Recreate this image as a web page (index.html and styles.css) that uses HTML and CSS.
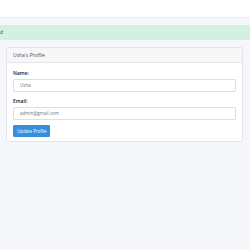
FILE: index.html
```html
<!DOCTYPE html>
<html>
<head>
<meta charset="utf-8">
<link rel="stylesheet" href="styles.css">
</head>
<body>
<nav class="navbar"></nav>
<div class="alert"><div class="alert-clip"><span class="alert-text">Profile updated</span></div></div>
<div class="card">
  <div class="card-header">Usha's Profile</div>
  <div class="card-body">
    <label class="label">Name:</label>
    <div class="input">Usha</div>
    <label class="label">Email:</label>
    <div class="input">admin@gmail.com</div>
    <button class="btn">Update Profile</button>
  </div>
</div>
</body>
</html>
```
FILE: styles.css
```css
html, body {
  margin: 0;
  padding: 0;
}
body {
  background: #f5f7fb;
  font-family: "Open Sans", "Noto Sans", sans-serif;
  font-size: 5px;
  color: #212529;
  width: 250px;
  height: 250px;
  overflow: hidden;
}
.navbar {
  height: 17px;
  background: #ffffff;
  border-bottom: 1px solid #e8eaef;
}
.alert {
  margin-top: 7px;
  height: 15px;
  background: #d4f0e1;
  display: flex;
  align-items: center;
  color: #155724;
}
.alert-clip {
  width: 3px;
  display: flex;
  justify-content: flex-end;
  overflow: hidden;
}
.alert-text {
  flex: none;
  white-space: nowrap;
  font-size: 5px;
  line-height: 7px;
}
.card {
  margin: 7px 7px 0 6px;
  background: #ffffff;
  border: 1px solid #e4e5e8;
  border-radius: 2px;
}
.card-header {
  height: 14px;
  line-height: 14px;
  padding: 0 6px;
  background: #f7f7f7;
  border-bottom: 1px solid #e4e5e8;
  color: #4a4f55;
  font-size: 5px;
}
.card-body {
  padding: 7px 6px 4px 6px;
  display: flex;
  flex-direction: column;
  align-items: flex-start;
}
.label {
  font-size: 5px;
  font-weight: 600;
  color: #222;
  line-height: 7px;
  margin-bottom: 2px;
}
.input {
  box-sizing: border-box;
  width: 100%;
  height: 13px;
  line-height: 11px;
  border: 1px solid #dcdfe3;
  border-radius: 1px;
  padding: 0 6px;
  color: #6c757d;
  font-size: 4.5px;
  margin-bottom: 6px;
  background: #fff;
}
.btn {
  margin-top: -1px;
  height: 12px;
  padding: 0 3px;
  background: #3490dc;
  border: 1px solid #3490dc;
  border-radius: 1px;
  color: #fff;
  font-family: inherit;
  font-size: 4.4px;
  line-height: 10px;
}
```
